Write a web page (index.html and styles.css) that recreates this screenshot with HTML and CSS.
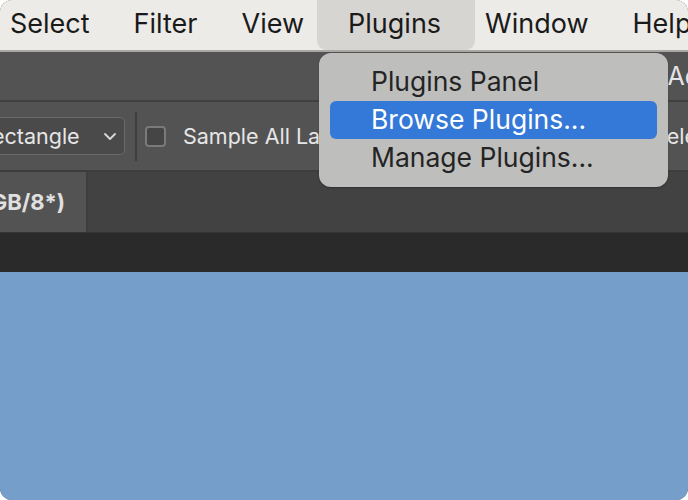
FILE: index.html
```html
<!DOCTYPE html>
<html>
<head>
<meta charset="utf-8">
<link rel="stylesheet" href="styles.css">
</head>
<body>
<div class="frame">
  <div class="menubar">
    <div class="mitem">Select</div>
    <div class="mitem">Filter</div>
    <div class="mitem">View</div>
    <div class="mitem active">Plugins</div>
    <div class="mitem">Window</div>
    <div class="mitem">Help</div>
  </div>
  <div class="appbar"><span class="appbar-text">Ad</span></div>
  <div class="options">
    <div class="select"><span>ectangle</span>
      <svg class="chev" width="14" height="9" viewBox="0 0 14 9"><path d="M2 2 L7 7 L12 2" fill="none" stroke="#d8d8d8" stroke-width="1.8" stroke-linecap="round" stroke-linejoin="round"/></svg>
    </div>
    <div class="vdiv"></div>
    <div class="checkbox"></div>
    <span class="opt-label">Sample All Layers</span>
    <span class="opt-right">Sele</span>
  </div>
  <div class="tabs">
    <div class="tab">(RGB/8*)</div>
  </div>
  <div class="strip"></div>
  <div class="canvas"></div>

  <div class="menu">
    <div class="menu-item">Plugins Panel</div>
    <div class="menu-item selected">Browse Plugins...</div>
    <div class="menu-item">Manage Plugins...</div>
  </div>
</div>
</body>
</html>
```

FILE: styles.css
```css
html, body {
  margin: 0;
  padding: 0;
  background: #ffffff;
}
.frame {
  position: relative;
  width: 688px;
  height: 500px;
  border-radius: 12px;
  overflow: hidden;
  background: #535353;
  display: flex;
  flex-direction: column;
  font-family: "Inter", "Noto Sans", sans-serif;
}
.menubar {
  height: 50px;
  flex: none;
  background: #ecebe7;
  border-bottom: 2px solid #a9a8a5;
  display: flex;
  align-items: stretch;
  margin-left: -12px;
  white-space: nowrap;
}
.mitem {
  padding: 0 22px;
  font-size: 27px;
  line-height: 48px;
  color: #1a1a1a;
}
.mitem.active {
  background: #d7d5d1;
  border-radius: 0 0 9px 9px;
  padding: 0 34px 0 31px;
  margin: 0 -12px 0 -9px;
}
.appbar {
  height: 48px;
  flex: none;
  background: #535353;
  border-bottom: 2px solid #414141;
  display: flex;
  justify-content: flex-end;
  align-items: center;
  overflow: hidden;
}
.appbar-text {
  font-size: 25px;
  color: #e4e4e4;
  margin-right: -12px;
  white-space: nowrap;
}
.options {
  height: 68px;
  flex: none;
  background: #535353;
  border-bottom: 2px solid #3d3d3d;
  display: flex;
  align-items: center;
  overflow: hidden;
  white-space: nowrap;
}
.select {
  width: 150px;
  margin-left: -25px;
  height: 38px;
  border: 1.5px solid #6a6a6a;
  border-radius: 5px;
  background: #4a4a4a;
  box-sizing: border-box;
  display: flex;
  align-items: center;
  justify-content: space-between;
  padding: 0 7px 0 16px;
  font-size: 21.5px;
  color: #e6e6e6;
  flex: none;
}
.chev { flex: none; }
.vdiv {
  width: 2px;
  height: 49px;
  background: #3f3f3f;
  margin-left: 10px;
  flex: none;
}
.checkbox {
  width: 21px;
  height: 21px;
  border: 2px solid #7a7a7a;
  border-radius: 4px;
  background: #454545;
  margin-left: 8px;
  box-sizing: border-box;
  flex: none;
}
.opt-label {
  font-size: 21.5px;
  color: #e6e6e6;
  margin-left: 17px;
}
.opt-right {
  font-size: 21.5px;
  color: #e6e6e6;
  margin-left: auto;
  margin-right: -9px;
}
.tabs {
  height: 60px;
  flex: none;
  background: #424242;
  display: flex;
  border-bottom: 1px solid #353535;
}
.tab {
  width: 88px;
  background: #535353;
  border-right: 2px solid #3e3e3e;
  font-size: 22px;
  font-weight: 700;
  color: #e0e0e0;
  line-height: 60px;
  padding-right: 21px;
  box-sizing: border-box;
  white-space: nowrap;
  overflow: hidden;
  display: flex;
  justify-content: flex-end;
}
.strip {
  height: 39px;
  flex: none;
  background: #2a2a2a;
}
.canvas {
  flex: 1;
  background: #769eca;
}
.menu {
  position: absolute;
  left: 319px;
  top: 53px;
  width: 349px;
  height: 134px;
  box-sizing: border-box;
  background: #bebebd;
  border-radius: 12px;
  padding: 10px 11px;
  box-shadow: 0 1px 2px rgba(0,0,0,0.25);
}
.menu-item {
  height: 38px;
  line-height: 37px;
  padding-left: 41px;
  font-size: 26.5px;
  color: #242424;
  border-radius: 6px;
  white-space: nowrap;
}
.menu-item.selected {
  background: #3478d8;
  color: #ffffff;
}
```
